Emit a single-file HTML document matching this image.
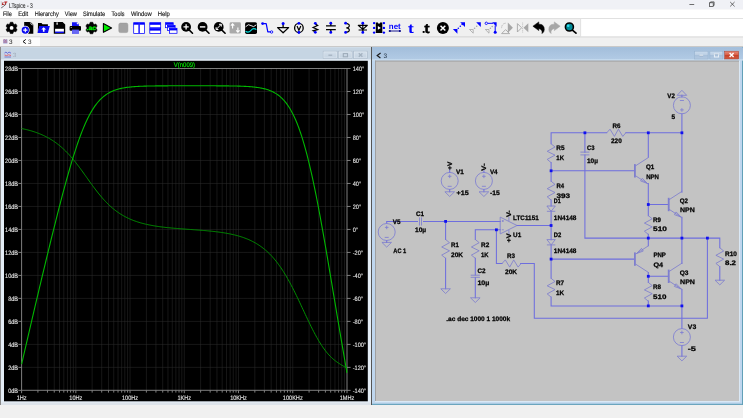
<!DOCTYPE html><html><head><meta charset="utf-8"><style>
html,body{margin:0;padding:0;width:743px;height:418px;overflow:hidden;background:#f0f0f0}
svg{display:block;will-change:transform} text{text-rendering:geometricPrecision}
</style></head><body><svg width="743" height="418" viewBox="0 0 743 418"><rect x="0" y="0" width="743" height="418" fill="#f0f0f0"/><rect x="0" y="0" width="743" height="9.5" fill="#f0f1f6"/><rect x="0" y="9.5" width="743" height="9" fill="#ffffff"/><rect x="0" y="18.5" width="743" height="18.5" fill="#ffffff"/><rect x="0" y="19" width="580" height="18" fill="#f0f0f0"/><rect x="0" y="18" width="743" height="0.8" fill="#dadada"/><rect x="0" y="36.6" width="743" height="0.9" fill="#c4c4c4"/><rect x="0" y="37.5" width="743" height="9" fill="#f0f0f0"/><rect x="0" y="37.5" width="20" height="9" fill="#f4f4f4"/><rect x="20" y="37.5" width="20" height="9" fill="#fdfdfd"/><rect x="0" y="46.3" width="743" height="0.8" fill="#b8b8b8"/><rect x="0" y="47" width="371" height="358" fill="#e4edf6"/><rect x="1" y="402.6" width="370" height="2.4" fill="#dde3ea"/><rect x="0" y="47" width="1" height="358" fill="#8a8a8a"/><rect x="1" y="47.3" width="370" height="12" fill="#c6d5e3"/><rect x="4" y="59.2" width="364" height="1.6" fill="#dfe9f2"/><rect x="4" y="60.8" width="363.8" height="340.5" fill="#000000"/><path d="M37.92,68.5 V390.3 M47.47,68.5 V390.3 M54.25,68.5 V390.3 M59.51,68.5 V390.3 M63.80,68.5 V390.3 M67.43,68.5 V390.3 M70.57,68.5 V390.3 M73.35,68.5 V390.3 M75.83,68.5 V390.3 M92.15,68.5 V390.3 M101.70,68.5 V390.3 M108.48,68.5 V390.3 M113.74,68.5 V390.3 M118.03,68.5 V390.3 M121.66,68.5 V390.3 M124.80,68.5 V390.3 M127.58,68.5 V390.3 M130.06,68.5 V390.3 M146.38,68.5 V390.3 M155.93,68.5 V390.3 M162.71,68.5 V390.3 M167.97,68.5 V390.3 M172.26,68.5 V390.3 M175.89,68.5 V390.3 M179.03,68.5 V390.3 M181.81,68.5 V390.3 M184.29,68.5 V390.3 M200.61,68.5 V390.3 M210.16,68.5 V390.3 M216.94,68.5 V390.3 M222.20,68.5 V390.3 M226.49,68.5 V390.3 M230.12,68.5 V390.3 M233.26,68.5 V390.3 M236.04,68.5 V390.3 M238.52,68.5 V390.3 M254.84,68.5 V390.3 M264.39,68.5 V390.3 M271.17,68.5 V390.3 M276.43,68.5 V390.3 M280.72,68.5 V390.3 M284.35,68.5 V390.3 M287.49,68.5 V390.3 M290.27,68.5 V390.3 M292.75,68.5 V390.3 M309.07,68.5 V390.3 M318.62,68.5 V390.3 M325.40,68.5 V390.3 M330.66,68.5 V390.3 M334.95,68.5 V390.3 M338.58,68.5 V390.3 M341.72,68.5 V390.3 M344.50,68.5 V390.3 M22.5,91.49 H347 M22.5,114.48 H347 M22.5,137.47 H347 M22.5,160.46 H347 M22.5,183.45 H347 M22.5,206.44 H347 M22.5,229.43 H347 M22.5,252.42 H347 M22.5,275.41 H347 M22.5,298.40 H347 M22.5,321.39 H347 M22.5,344.38 H347 M22.5,367.37 H347" stroke="#2e2e2e" stroke-width="1" stroke-dasharray="1 1" fill="none"/><path d="M21.6,68.5 V390.3 M21.6,68.5 H347 M347,68.5 V390.3 M21.6,390.3 H347" stroke="#8c8c8c" stroke-width="0.9" fill="none"/><path d="M18.4,68.50 H21.6 M347,68.50 H350.6 M18.4,91.49 H21.6 M347,91.49 H350.6 M18.4,114.48 H21.6 M347,114.48 H350.6 M18.4,137.47 H21.6 M347,137.47 H350.6 M18.4,160.46 H21.6 M347,160.46 H350.6 M18.4,183.45 H21.6 M347,183.45 H350.6 M18.4,206.44 H21.6 M347,206.44 H350.6 M18.4,229.43 H21.6 M347,229.43 H350.6 M18.4,252.42 H21.6 M347,252.42 H350.6 M18.4,275.41 H21.6 M347,275.41 H350.6 M18.4,298.40 H21.6 M347,298.40 H350.6 M18.4,321.39 H21.6 M347,321.39 H350.6 M18.4,344.38 H21.6 M347,344.38 H350.6 M18.4,367.37 H21.6 M347,367.37 H350.6 M18.4,390.36 H21.6 M347,390.36 H350.6 M21.60,390.3 V393.2 M37.92,390.3 V392.6 M47.47,390.3 V392.6 M54.25,390.3 V392.6 M59.51,390.3 V392.6 M63.80,390.3 V392.6 M67.43,390.3 V392.6 M70.57,390.3 V392.6 M73.35,390.3 V392.6 M75.83,390.3 V393.2 M92.15,390.3 V392.6 M101.70,390.3 V392.6 M108.48,390.3 V392.6 M113.74,390.3 V392.6 M118.03,390.3 V392.6 M121.66,390.3 V392.6 M124.80,390.3 V392.6 M127.58,390.3 V392.6 M130.06,390.3 V393.2 M146.38,390.3 V392.6 M155.93,390.3 V392.6 M162.71,390.3 V392.6 M167.97,390.3 V392.6 M172.26,390.3 V392.6 M175.89,390.3 V392.6 M179.03,390.3 V392.6 M181.81,390.3 V392.6 M184.29,390.3 V393.2 M200.61,390.3 V392.6 M210.16,390.3 V392.6 M216.94,390.3 V392.6 M222.20,390.3 V392.6 M226.49,390.3 V392.6 M230.12,390.3 V392.6 M233.26,390.3 V392.6 M236.04,390.3 V392.6 M238.52,390.3 V393.2 M254.84,390.3 V392.6 M264.39,390.3 V392.6 M271.17,390.3 V392.6 M276.43,390.3 V392.6 M280.72,390.3 V392.6 M284.35,390.3 V392.6 M287.49,390.3 V392.6 M290.27,390.3 V392.6 M292.75,390.3 V393.2 M309.07,390.3 V392.6 M318.62,390.3 V392.6 M325.40,390.3 V392.6 M330.66,390.3 V392.6 M334.95,390.3 V392.6 M338.58,390.3 V392.6 M341.72,390.3 V392.6 M344.50,390.3 V392.6 M347,390.3 V393.2" stroke="#8c8c8c" stroke-width="0.9" fill="none"/><g font-family="Liberation Sans, sans-serif" font-size="6.5" fill="#e4e4e4" stroke="#e4e4e4" stroke-width="0.12"><text x="18.1" y="70.90" text-anchor="end" textLength="13.06" lengthAdjust="spacingAndGlyphs">28dB</text><text x="352.7" y="70.90" textLength="11.56" lengthAdjust="spacingAndGlyphs">140°</text><text x="18.1" y="93.89" text-anchor="end" textLength="13.06" lengthAdjust="spacingAndGlyphs">26dB</text><text x="352.7" y="93.89" textLength="11.56" lengthAdjust="spacingAndGlyphs">120°</text><text x="18.1" y="116.88" text-anchor="end" textLength="13.06" lengthAdjust="spacingAndGlyphs">24dB</text><text x="352.7" y="116.88" textLength="11.56" lengthAdjust="spacingAndGlyphs">100°</text><text x="18.1" y="139.87" text-anchor="end" textLength="13.06" lengthAdjust="spacingAndGlyphs">22dB</text><text x="352.7" y="139.87" textLength="8.45" lengthAdjust="spacingAndGlyphs">80°</text><text x="18.1" y="162.86" text-anchor="end" textLength="13.06" lengthAdjust="spacingAndGlyphs">20dB</text><text x="352.7" y="162.86" textLength="8.45" lengthAdjust="spacingAndGlyphs">60°</text><text x="18.1" y="185.85" text-anchor="end" textLength="13.06" lengthAdjust="spacingAndGlyphs">18dB</text><text x="352.7" y="185.85" textLength="8.45" lengthAdjust="spacingAndGlyphs">40°</text><text x="18.1" y="208.84" text-anchor="end" textLength="13.06" lengthAdjust="spacingAndGlyphs">16dB</text><text x="352.7" y="208.84" textLength="8.45" lengthAdjust="spacingAndGlyphs">20°</text><text x="18.1" y="231.83" text-anchor="end" textLength="13.06" lengthAdjust="spacingAndGlyphs">14dB</text><text x="352.7" y="231.83" textLength="5.34" lengthAdjust="spacingAndGlyphs">0°</text><text x="18.1" y="254.82" text-anchor="end" textLength="13.06" lengthAdjust="spacingAndGlyphs">12dB</text><text x="352.7" y="254.82" textLength="10.31" lengthAdjust="spacingAndGlyphs">-20°</text><text x="18.1" y="277.81" text-anchor="end" textLength="13.06" lengthAdjust="spacingAndGlyphs">10dB</text><text x="352.7" y="277.81" textLength="10.31" lengthAdjust="spacingAndGlyphs">-40°</text><text x="18.1" y="300.80" text-anchor="end" textLength="9.95" lengthAdjust="spacingAndGlyphs">8dB</text><text x="352.7" y="300.80" textLength="10.31" lengthAdjust="spacingAndGlyphs">-60°</text><text x="18.1" y="323.79" text-anchor="end" textLength="9.95" lengthAdjust="spacingAndGlyphs">6dB</text><text x="352.7" y="323.79" textLength="10.31" lengthAdjust="spacingAndGlyphs">-80°</text><text x="18.1" y="346.78" text-anchor="end" textLength="9.95" lengthAdjust="spacingAndGlyphs">4dB</text><text x="352.7" y="346.78" textLength="13.42" lengthAdjust="spacingAndGlyphs">-100°</text><text x="18.1" y="369.77" text-anchor="end" textLength="9.95" lengthAdjust="spacingAndGlyphs">2dB</text><text x="352.7" y="369.77" textLength="13.42" lengthAdjust="spacingAndGlyphs">-120°</text><text x="18.1" y="392.76" text-anchor="end" textLength="9.95" lengthAdjust="spacingAndGlyphs">0dB</text><text x="352.7" y="392.76" textLength="13.42" lengthAdjust="spacingAndGlyphs">-140°</text><text x="21.60" y="399.6" text-anchor="middle" textLength="9.94" lengthAdjust="spacingAndGlyphs">1Hz</text><text x="75.83" y="399.6" text-anchor="middle" textLength="13.05" lengthAdjust="spacingAndGlyphs">10Hz</text><text x="130.06" y="399.6" text-anchor="middle" textLength="16.16" lengthAdjust="spacingAndGlyphs">100Hz</text><text x="184.29" y="399.6" text-anchor="middle" textLength="13.67" lengthAdjust="spacingAndGlyphs">1KHz</text><text x="238.52" y="399.6" text-anchor="middle" textLength="16.78" lengthAdjust="spacingAndGlyphs">10KHz</text><text x="292.75" y="399.6" text-anchor="middle" textLength="19.89" lengthAdjust="spacingAndGlyphs">100KHz</text><text x="346.98" y="399.6" text-anchor="middle" textLength="14.60" lengthAdjust="spacingAndGlyphs">1MHz</text></g><text x="184.4" y="66.9" font-family="Liberation Sans, sans-serif" font-size="6.6" fill="#00dd00" stroke="#00dd00" stroke-width="0.2" text-anchor="middle" textLength="21.2" lengthAdjust="spacingAndGlyphs">V(n009)</text><path d="M21.60,128.55 L22.42,128.71 L23.23,128.88 L24.05,129.05 L24.86,129.23 L25.68,129.42 L26.49,129.61 L27.31,129.81 L28.12,130.02 L28.94,130.23 L29.75,130.46 L30.57,130.69 L31.39,130.92 L32.20,131.17 L33.02,131.42 L33.83,131.68 L34.65,131.95 L35.46,132.23 L36.28,132.52 L37.09,132.81 L37.91,133.12 L38.73,133.43 L39.54,133.76 L40.36,134.09 L41.17,134.44 L41.99,134.79 L42.80,135.16 L43.62,135.53 L44.43,135.92 L45.25,136.32 L46.06,136.73 L46.88,137.15 L47.70,137.59 L48.51,138.04 L49.33,138.50 L50.14,138.97 L50.96,139.46 L51.77,139.97 L52.59,140.49 L53.40,141.02 L54.22,141.57 L55.04,142.14 L55.85,142.72 L56.67,143.32 L57.48,143.94 L58.30,144.57 L59.11,145.22 L59.93,145.89 L60.74,146.57 L61.56,147.28 L62.37,148.00 L63.19,148.75 L64.01,149.51 L64.82,150.29 L65.64,151.09 L66.45,151.91 L67.27,152.75 L68.08,153.61 L68.90,154.48 L69.71,155.38 L70.53,156.30 L71.34,157.23 L72.16,158.18 L72.98,159.15 L73.79,160.14 L74.61,161.14 L75.42,162.16 L76.24,163.20 L77.05,164.25 L77.87,165.32 L78.68,166.39 L79.50,167.48 L80.32,168.58 L81.13,169.70 L81.95,170.81 L82.76,171.94 L83.58,173.08 L84.39,174.21 L85.21,175.36 L86.02,176.50 L86.84,177.65 L87.65,178.79 L88.47,179.94 L89.29,181.08 L90.10,182.21 L90.92,183.35 L91.73,184.47 L92.55,185.59 L93.36,186.69 L94.18,187.79 L94.99,188.87 L95.81,189.95 L96.62,191.00 L97.44,192.05 L98.26,193.08 L99.07,194.09 L99.89,195.09 L100.70,196.06 L101.52,197.03 L102.33,197.97 L103.15,198.89 L103.96,199.80 L104.78,200.68 L105.60,201.55 L106.41,202.39 L107.23,203.22 L108.04,204.03 L108.86,204.82 L109.67,205.58 L110.49,206.33 L111.30,207.06 L112.12,207.77 L112.93,208.46 L113.75,209.13 L114.57,209.78 L115.38,210.42 L116.20,211.03 L117.01,211.63 L117.83,212.21 L118.64,212.77 L119.46,213.32 L120.27,213.85 L121.09,214.37 L121.91,214.87 L122.72,215.35 L123.54,215.82 L124.35,216.27 L125.17,216.71 L125.98,217.14 L126.80,217.55 L127.61,217.95 L128.43,218.34 L129.24,218.71 L130.06,219.08 L130.88,219.43 L131.69,219.77 L132.51,220.10 L133.32,220.42 L134.14,220.72 L134.95,221.02 L135.77,221.31 L136.58,221.59 L137.40,221.86 L138.21,222.12 L139.03,222.38 L139.85,222.62 L140.66,222.86 L141.48,223.09 L142.29,223.31 L143.11,223.53 L143.92,223.73 L144.74,223.93 L145.55,224.13 L146.37,224.32 L147.19,224.50 L148.00,224.68 L148.82,224.85 L149.63,225.01 L150.45,225.17 L151.26,225.33 L152.08,225.48 L152.89,225.63 L153.71,225.77 L154.52,225.90 L155.34,226.04 L156.16,226.17 L156.97,226.29 L157.79,226.41 L158.60,226.53 L159.42,226.64 L160.23,226.75 L161.05,226.86 L161.86,226.97 L162.68,227.07 L163.50,227.17 L164.31,227.26 L165.13,227.36 L165.94,227.45 L166.76,227.54 L167.57,227.62 L168.39,227.71 L169.20,227.79 L170.02,227.87 L170.83,227.95 L171.65,228.02 L172.47,228.10 L173.28,228.17 L174.10,228.24 L174.91,228.31 L175.73,228.38 L176.54,228.45 L177.36,228.52 L178.17,228.58 L178.99,228.65 L179.80,228.71 L180.62,228.77 L181.44,228.84 L182.25,228.90 L183.07,228.96 L183.88,229.02 L184.70,229.08 L185.51,229.14 L186.33,229.20 L187.14,229.25 L187.96,229.31 L188.78,229.37 L189.59,229.43 L190.41,229.49 L191.22,229.54 L192.04,229.60 L192.85,229.66 L193.67,229.72 L194.48,229.78 L195.30,229.84 L196.11,229.90 L196.93,229.96 L197.75,230.02 L198.56,230.08 L199.38,230.15 L200.19,230.21 L201.01,230.27 L201.82,230.34 L202.64,230.41 L203.45,230.47 L204.27,230.54 L205.08,230.61 L205.90,230.68 L206.72,230.76 L207.53,230.83 L208.35,230.91 L209.16,230.99 L209.98,231.07 L210.79,231.15 L211.61,231.23 L212.42,231.32 L213.24,231.41 L214.06,231.50 L214.87,231.59 L215.69,231.69 L216.50,231.79 L217.32,231.89 L218.13,231.99 L218.95,232.10 L219.76,232.21 L220.58,232.33 L221.39,232.44 L222.21,232.56 L223.03,232.69 L223.84,232.82 L224.66,232.95 L225.47,233.09 L226.29,233.23 L227.10,233.38 L227.92,233.53 L228.73,233.68 L229.55,233.84 L230.37,234.01 L231.18,234.18 L232.00,234.36 L232.81,234.54 L233.63,234.73 L234.44,234.92 L235.26,235.12 L236.07,235.33 L236.89,235.55 L237.70,235.77 L238.52,236.00 L239.34,236.24 L240.15,236.49 L240.97,236.74 L241.78,237.00 L242.60,237.28 L243.41,237.56 L244.23,237.85 L245.04,238.15 L245.86,238.46 L246.67,238.78 L247.49,239.11 L248.31,239.46 L249.12,239.81 L249.94,240.18 L250.75,240.56 L251.57,240.95 L252.38,241.36 L253.20,241.78 L254.01,242.21 L254.83,242.66 L255.65,243.12 L256.46,243.60 L257.28,244.10 L258.09,244.61 L258.91,245.14 L259.72,245.69 L260.54,246.25 L261.35,246.83 L262.17,247.44 L262.98,248.06 L263.80,248.70 L264.62,249.36 L265.43,250.05 L266.25,250.75 L267.06,251.48 L267.88,252.23 L268.69,253.01 L269.51,253.81 L270.32,254.63 L271.14,255.48 L271.96,256.35 L272.77,257.26 L273.59,258.18 L274.40,259.14 L275.22,260.12 L276.03,261.13 L276.85,262.17 L277.66,263.23 L278.48,264.33 L279.29,265.46 L280.11,266.61 L280.93,267.79 L281.74,269.01 L282.56,270.25 L283.37,271.53 L284.19,272.83 L285.00,274.16 L285.82,275.52 L286.63,276.91 L287.45,278.33 L288.26,279.77 L289.08,281.25 L289.90,282.74 L290.71,284.27 L291.53,285.82 L292.34,287.39 L293.16,288.99 L293.97,290.60 L294.79,292.24 L295.60,293.89 L296.42,295.57 L297.24,297.25 L298.05,298.96 L298.87,300.67 L299.68,302.39 L300.50,304.13 L301.31,305.87 L302.13,307.61 L302.94,309.36 L303.76,311.10 L304.57,312.85 L305.39,314.59 L306.21,316.32 L307.02,318.05 L307.84,319.77 L308.65,321.47 L309.47,323.16 L310.28,324.84 L311.10,326.49 L311.91,328.13 L312.73,329.74 L313.54,331.33 L314.36,332.89 L315.18,334.42 L315.99,335.93 L316.81,337.40 L317.62,338.84 L318.44,340.24 L319.25,341.61 L320.07,342.95 L320.88,344.24 L321.70,345.50 L322.52,346.72 L323.33,347.90 L324.15,349.03 L324.96,350.13 L325.78,351.19 L326.59,352.21 L327.41,353.19 L328.22,354.13 L329.04,355.03 L329.85,355.89 L330.67,356.72 L331.49,357.51 L332.30,358.27 L333.12,358.99 L333.93,359.69 L334.75,360.35 L335.56,360.99 L336.38,361.60 L337.19,362.18 L338.01,362.75 L338.83,363.29 L339.64,363.82 L340.46,364.33 L341.27,364.83 L342.09,365.32 L342.90,365.80 L343.72,366.27 L344.53,366.74 L345.35,367.20 L346.16,367.67 L346.98,368.13" stroke="#009000" stroke-width="1.0" fill="none"/><path d="M21.60,364.10 L22.42,360.58 L23.23,357.06 L24.05,353.54 L24.86,350.03 L25.68,346.52 L26.49,343.01 L27.31,339.51 L28.12,336.01 L28.94,332.51 L29.75,329.02 L30.57,325.53 L31.39,322.05 L32.20,318.57 L33.02,315.10 L33.83,311.63 L34.65,308.16 L35.46,304.70 L36.28,301.24 L37.09,297.79 L37.91,294.35 L38.73,290.91 L39.54,287.48 L40.36,284.05 L41.17,280.63 L41.99,277.21 L42.80,273.81 L43.62,270.41 L44.43,267.01 L45.25,263.63 L46.06,260.25 L46.88,256.88 L47.70,253.52 L48.51,250.17 L49.33,246.83 L50.14,243.50 L50.96,240.17 L51.77,236.87 L52.59,233.57 L53.40,230.28 L54.22,227.01 L55.04,223.76 L55.85,220.51 L56.67,217.29 L57.48,214.08 L58.30,210.89 L59.11,207.71 L59.93,204.56 L60.74,201.43 L61.56,198.31 L62.37,195.23 L63.19,192.16 L64.01,189.12 L64.82,186.11 L65.64,183.13 L66.45,180.17 L67.27,177.25 L68.08,174.36 L68.90,171.50 L69.71,168.68 L70.53,165.90 L71.34,163.15 L72.16,160.45 L72.98,157.78 L73.79,155.16 L74.61,152.59 L75.42,150.06 L76.24,147.58 L77.05,145.15 L77.87,142.77 L78.68,140.44 L79.50,138.16 L80.32,135.94 L81.13,133.78 L81.95,131.67 L82.76,129.62 L83.58,127.63 L84.39,125.69 L85.21,123.82 L86.02,122.01 L86.84,120.25 L87.65,118.56 L88.47,116.92 L89.29,115.35 L90.10,113.83 L90.92,112.37 L91.73,110.97 L92.55,109.63 L93.36,108.35 L94.18,107.12 L94.99,105.94 L95.81,104.82 L96.62,103.75 L97.44,102.73 L98.26,101.76 L99.07,100.83 L99.89,99.95 L100.70,99.12 L101.52,98.33 L102.33,97.58 L103.15,96.87 L103.96,96.20 L104.78,95.57 L105.60,94.97 L106.41,94.41 L107.23,93.87 L108.04,93.37 L108.86,92.90 L109.67,92.45 L110.49,92.03 L111.30,91.63 L112.12,91.26 L112.93,90.91 L113.75,90.59 L114.57,90.28 L115.38,89.99 L116.20,89.72 L117.01,89.46 L117.83,89.23 L118.64,89.00 L119.46,88.79 L120.27,88.60 L121.09,88.41 L121.91,88.24 L122.72,88.08 L123.54,87.93 L124.35,87.79 L125.17,87.65 L125.98,87.53 L126.80,87.41 L127.61,87.31 L128.43,87.21 L129.24,87.11 L130.06,87.02 L130.88,86.94 L131.69,86.86 L132.51,86.79 L133.32,86.72 L134.14,86.66 L134.95,86.60 L135.77,86.55 L136.58,86.49 L137.40,86.45 L138.21,86.40 L139.03,86.36 L139.85,86.32 L140.66,86.28 L141.48,86.25 L142.29,86.22 L143.11,86.19 L143.92,86.16 L144.74,86.14 L145.55,86.11 L146.37,86.09 L147.19,86.07 L148.00,86.05 L148.82,86.03 L149.63,86.01 L150.45,86.00 L151.26,85.98 L152.08,85.97 L152.89,85.95 L153.71,85.94 L154.52,85.93 L155.34,85.92 L156.16,85.91 L156.97,85.90 L157.79,85.89 L158.60,85.89 L159.42,85.88 L160.23,85.87 L161.05,85.86 L161.86,85.86 L162.68,85.85 L163.50,85.85 L164.31,85.84 L165.13,85.84 L165.94,85.83 L166.76,85.83 L167.57,85.83 L168.39,85.82 L169.20,85.82 L170.02,85.82 L170.83,85.81 L171.65,85.81 L172.47,85.81 L173.28,85.81 L174.10,85.80 L174.91,85.80 L175.73,85.80 L176.54,85.80 L177.36,85.80 L178.17,85.80 L178.99,85.80 L179.80,85.79 L180.62,85.79 L181.44,85.79 L182.25,85.79 L183.07,85.79 L183.88,85.79 L184.70,85.79 L185.51,85.79 L186.33,85.79 L187.14,85.79 L187.96,85.79 L188.78,85.79 L189.59,85.79 L190.41,85.79 L191.22,85.79 L192.04,85.79 L192.85,85.79 L193.67,85.79 L194.48,85.79 L195.30,85.79 L196.11,85.79 L196.93,85.79 L197.75,85.79 L198.56,85.79 L199.38,85.79 L200.19,85.79 L201.01,85.79 L201.82,85.79 L202.64,85.79 L203.45,85.79 L204.27,85.79 L205.08,85.80 L205.90,85.80 L206.72,85.80 L207.53,85.80 L208.35,85.80 L209.16,85.80 L209.98,85.80 L210.79,85.81 L211.61,85.81 L212.42,85.81 L213.24,85.81 L214.06,85.82 L214.87,85.82 L215.69,85.82 L216.50,85.83 L217.32,85.83 L218.13,85.83 L218.95,85.84 L219.76,85.84 L220.58,85.85 L221.39,85.85 L222.21,85.86 L223.03,85.87 L223.84,85.87 L224.66,85.88 L225.47,85.89 L226.29,85.89 L227.10,85.90 L227.92,85.91 L228.73,85.92 L229.55,85.93 L230.37,85.94 L231.18,85.96 L232.00,85.97 L232.81,85.98 L233.63,86.00 L234.44,86.02 L235.26,86.03 L236.07,86.05 L236.89,86.07 L237.70,86.09 L238.52,86.12 L239.34,86.14 L240.15,86.17 L240.97,86.19 L241.78,86.22 L242.60,86.26 L243.41,86.29 L244.23,86.33 L245.04,86.37 L245.86,86.41 L246.67,86.46 L247.49,86.50 L248.31,86.56 L249.12,86.61 L249.94,86.67 L250.75,86.74 L251.57,86.81 L252.38,86.88 L253.20,86.96 L254.01,87.04 L254.83,87.13 L255.65,87.23 L256.46,87.33 L257.28,87.44 L258.09,87.56 L258.91,87.69 L259.72,87.82 L260.54,87.97 L261.35,88.12 L262.17,88.29 L262.98,88.46 L263.80,88.65 L264.62,88.85 L265.43,89.07 L266.25,89.30 L267.06,89.54 L267.88,89.81 L268.69,90.09 L269.51,90.39 L270.32,90.71 L271.14,91.05 L271.96,91.41 L272.77,91.80 L273.59,92.21 L274.40,92.65 L275.22,93.12 L276.03,93.61 L276.85,94.14 L277.66,94.71 L278.48,95.31 L279.29,95.94 L280.11,96.62 L280.93,97.33 L281.74,98.09 L282.56,98.90 L283.37,99.75 L284.19,100.66 L285.00,101.61 L285.82,102.62 L286.63,103.69 L287.45,104.82 L288.26,106.00 L289.08,107.26 L289.90,108.57 L290.71,109.96 L291.53,111.42 L292.34,112.95 L293.16,114.56 L293.97,116.24 L294.79,118.00 L295.60,119.84 L296.42,121.77 L297.24,123.78 L298.05,125.88 L298.87,128.06 L299.68,130.34 L300.50,132.70 L301.31,135.15 L302.13,137.70 L302.94,140.34 L303.76,143.07 L304.57,145.90 L305.39,148.82 L306.21,151.83 L307.02,154.93 L307.84,158.13 L308.65,161.41 L309.47,164.79 L310.28,168.26 L311.10,171.81 L311.91,175.46 L312.73,179.18 L313.54,182.99 L314.36,186.88 L315.18,190.85 L315.99,194.89 L316.81,199.01 L317.62,203.20 L318.44,207.45 L319.25,211.77 L320.07,216.15 L320.88,220.59 L321.70,225.08 L322.52,229.62 L323.33,234.21 L324.15,238.84 L324.96,243.51 L325.78,248.21 L326.59,252.95 L327.41,257.71 L328.22,262.50 L329.04,267.31 L329.85,272.13 L330.67,276.97 L331.49,281.82 L332.30,286.68 L333.12,291.54 L333.93,296.40 L334.75,301.26 L335.56,306.11 L336.38,310.96 L337.19,315.80 L338.01,320.63 L338.83,325.45 L339.64,330.25 L340.46,335.04 L341.27,339.82 L342.09,344.58 L342.90,349.32 L343.72,354.06 L344.53,358.77 L345.35,363.47 L346.16,368.16 L346.98,372.83" stroke="#00b800" stroke-width="1.1" fill="none"/><rect x="371" y="47" width="1" height="358" fill="#555"/><rect x="372" y="47" width="371" height="358" fill="#bfd6ee"/><rect x="372" y="47.3" width="371" height="12.5" fill="#a3bfdb"/><rect x="372" y="403.8" width="371" height="1.1" fill="#62a0b8"/><rect x="742" y="47" width="1" height="358" fill="#62a0b8"/><rect x="375" y="60.6" width="365" height="341.6" fill="#dae8f5"/><rect x="375" y="60.6" width="364" height="340.4" fill="#c3c3c3"/><defs><linearGradient id="gclose" x1="0" y1="0" x2="0" y2="1"><stop offset="0" stop-color="#e88a78"/><stop offset="0.45" stop-color="#d8604a"/><stop offset="0.5" stop-color="#c84028"/><stop offset="1" stop-color="#d05a40"/></linearGradient><linearGradient id="gbtn" x1="0" y1="0" x2="0" y2="1"><stop offset="0" stop-color="#cadcee"/><stop offset="0.45" stop-color="#bccfe4"/><stop offset="0.5" stop-color="#a8c0da"/><stop offset="1" stop-color="#b4cae2"/></linearGradient><linearGradient id="gtitle" x1="0" y1="0" x2="0" y2="1"><stop offset="0" stop-color="#a3bedb"/><stop offset="1" stop-color="#b2cbe5"/></linearGradient><linearGradient id="gbtn2" x1="0" y1="0" x2="0" y2="1"><stop offset="0" stop-color="#d6e1ec"/><stop offset="0.5" stop-color="#cbd8e5"/><stop offset="1" stop-color="#c6d4e2"/></linearGradient></defs><rect x="372" y="47.4" width="371" height="12.6" fill="url(#gtitle)"/><rect x="372" y="59.2" width="371" height="1.4" fill="#c8dcef"/><rect x="694.7" y="51.2" width="13.299999999999955" height="7.8" fill="url(#gbtn)" stroke="#94b0cc" stroke-width="0.5"/><rect x="709.9" y="51.2" width="12.899999999999977" height="7.8" fill="url(#gbtn)" stroke="#94b0cc" stroke-width="0.5"/><rect x="724.7" y="51.2" width="14" height="7.8" fill="url(#gclose)" stroke="#a84030" stroke-width="0.5"/><path d="M699.6,55.4 H703.1" stroke="#eef4fa" stroke-width="1.3"/><path d="M699.6,55.9 H703.1" stroke="#6a86a4" stroke-width="0.4"/><rect x="714.4" y="53.8" width="4.2" height="3.2" fill="none" stroke="#eef4fa" stroke-width="0.9"/><path d="M714.4,54.2 H718.6" stroke="#7890aa" stroke-width="0.4"/><path d="M729.6,53.1 L733.6,57.1 M733.6,53.1 L729.6,57.1" stroke="#fff" stroke-width="1.4"/><path d="M380.6,53 L377.2,55.6 L380.4,58" stroke="#1a1a1a" stroke-width="1.2" fill="none"/><text x="383.5" y="57.7" font-family="Liberation Sans, sans-serif" font-size="6.5" fill="#2a3a4c">3</text><rect x="375" y="60.6" width="364" height="0.9" fill="#9c9c9c"/><rect x="375" y="60.6" width="0.9" height="340.4" fill="#9c9c9c"/><rect x="323.2" y="51.2" width="14.100000000000023" height="7.4" fill="url(#gbtn2)" stroke="#aebdcc" stroke-width="0.7"/><rect x="323.9" y="51.9" width="12.700000000000022" height="6" fill="none" stroke="#e2eaf2" stroke-width="0.5"/><rect x="338.4" y="51.2" width="13.600000000000023" height="7.4" fill="url(#gbtn2)" stroke="#aebdcc" stroke-width="0.7"/><rect x="339.09999999999997" y="51.9" width="12.200000000000022" height="6" fill="none" stroke="#e2eaf2" stroke-width="0.5"/><rect x="353.6" y="51.2" width="13.699999999999989" height="7.4" fill="url(#gbtn2)" stroke="#aebdcc" stroke-width="0.7"/><rect x="354.3" y="51.9" width="12.299999999999988" height="6" fill="none" stroke="#e2eaf2" stroke-width="0.5"/><path d="M328.4,55.2 H332.2" stroke="#a4b2c0" stroke-width="1.3"/><rect x="343.3" y="53.6" width="4.2" height="3.2" fill="none" stroke="#9eacba" stroke-width="1.1"/><path d="M358.8,53.2 L362.4,56.8 M362.4,53.2 L358.8,56.8" stroke="#a4b2c0" stroke-width="1.3"/><rect x="4.2" y="51.7" width="7.2" height="6.2" fill="#c8cde8"/><path d="M4.5,53 L6,52 L7.5,53.4 L9,52 L11,53.2" stroke="#5060d0" stroke-width="0.8" fill="none"/><path d="M4.5,55 L6.5,55.6 L8.5,54.8 L11,55.5" stroke="#e06060" stroke-width="0.9" fill="none"/><path d="M4.5,57 H11" stroke="#6070c0" stroke-width="0.8"/><text x="13" y="57.4" font-family="Liberation Sans, sans-serif" font-size="6" fill="#a0aab8">3</text><path d="M386.7,223.2 L386.7,221.4 M386.7,221.4 L417.5,221.4 M423.5,221.4 L500.2,221.4 M445.6,221.4 L445.6,239.5 M445.6,258.3 L445.6,288.8 M475.3,229.8 L500.2,229.8 M475.3,229.8 L475.3,239.5 M475.3,258.3 L475.3,275.0 M475.3,277.5 L475.3,297.8 M496.4,229.8 L496.4,263.5 M496.4,263.5 L502.0,263.5 M520.6,263.5 L534.3,263.5 M534.3,263.5 L534.3,318.2 M534.3,318.2 L707.4,318.2 M707.4,318.2 L707.4,238.1 M517.0,225.5 L551.1,225.5 M551.1,132.8 L551.1,143.8 M551.1,162.5 L551.1,181.2 M551.1,199.9 L551.1,206.0 M551.1,211.3 L551.1,239.6 M551.1,245.3 L551.1,278.3 M551.1,297.0 L551.1,305.9 M551.1,305.9 L681.9,305.9 M551.1,132.8 L606.7,132.8 M625.8,132.8 L681.9,132.8 M584.9,132.8 L584.9,152.1 M584.9,154.9 L584.9,238.1 M584.9,238.1 L719.8,238.1 M551.1,170.8 L634.8,170.8 M551.1,259.1 L634.8,259.1 M648.3,132.8 L648.3,157.2 M648.3,183.6 L648.3,215.6 M648.3,204.5 L668.6,204.5 M648.3,234.3 L648.3,245.7 M648.3,272.4 L648.3,282.4 M648.3,276.3 L668.6,276.3 M648.3,301.1 L648.3,305.9 M681.9,113.7 L681.9,192.3 M681.9,217.2 L681.9,263.5 M681.9,289.5 L681.9,328.5 M681.9,345.7 L681.9,356.2 M719.8,238.1 L719.8,247.8 M719.8,266.6 L719.8,280.2 M449.7,189.4 L449.7,191.8 M483.9,189.4 L483.9,191.8 M386.7,240.8 L386.7,242.4 M681.9,95.3 L681.9,96.9 M449.7,169.8 L449.7,172.4 M483.9,170.8 L483.9,172.4" stroke="#6e6ede" stroke-width="1.05" fill="none" stroke-linecap="square"/><rect x="634.0" y="164.10000000000002" width="1.8" height="13.4" fill="#7e7ece"/><rect x="667.8000000000001" y="197.8" width="1.8" height="13.4" fill="#7e7ece"/><rect x="634.0" y="252.40000000000003" width="1.8" height="13.4" fill="#7e7ece"/><rect x="667.8000000000001" y="269.6" width="1.8" height="13.4" fill="#7e7ece"/><path d="M445.60,239.50 L449.50,242.70 L441.70,247.00 L449.50,250.80 L441.70,255.10 L445.60,258.30 M475.30,239.50 L479.20,242.70 L471.40,247.00 L479.20,250.80 L471.40,255.10 L475.30,258.30 M551.10,143.80 L555.00,147.00 L547.20,151.30 L555.00,155.10 L547.20,159.40 L551.10,162.60 M551.10,181.20 L555.00,184.40 L547.20,188.70 L555.00,192.50 L547.20,196.80 L551.10,200.00 M551.10,278.30 L555.00,281.50 L547.20,285.80 L555.00,289.60 L547.20,293.90 L551.10,297.10 M648.30,215.60 L652.20,218.80 L644.40,223.10 L652.20,226.90 L644.40,231.20 L648.30,234.40 M648.30,282.40 L652.20,285.60 L644.40,289.90 L652.20,293.70 L644.40,298.00 L648.30,301.20 M719.80,247.80 L723.70,251.00 L715.90,255.30 L723.70,259.10 L715.90,263.40 L719.80,266.60 M606.70,132.80 L610.00,129.20 L614.40,136.40 L618.40,129.20 L622.80,136.40 L625.80,132.80 M502.00,263.50 L505.30,259.90 L509.70,267.10 L513.70,259.90 L518.10,267.10 L521.10,263.50 M419.5,217.4 V225.5 M421.5,217.4 V225.5 M470.7,275.2 H479.9 M470.7,277.3 H479.9 M580.4,152.1 H589.4 M580.4,154.9 H589.4 M440.8,288.8 H450.40000000000003 L445.6,293.5 Z M470.5,297.8 H480.1 L475.3,302.5 Z M381.9,242.4 H391.5 L386.7,247.1 Z M444.9,191.8 H454.5 L449.7,196.5 Z M479.09999999999997,191.8 H488.7 L483.9,196.5 Z M715.0,280.2 H724.5999999999999 L719.8,284.9 Z M677.1,356.2 H686.6999999999999 L681.9,360.9 Z M677.1,95.3 H686.7 L681.9,90.3 Z M546.9,206.0 H555.3 L551.1,211.3 Z M546.9,211.3 H555.3 M546.9,239.6 H555.3 L551.1,244.9 Z M546.9,244.9 H555.3 M500.2,217.1 L500.2,233.9 L517.0,225.5 Z M501.8,221.0 H503.8 M502.8,220.0 V222.0 M501.8,229.8 H503.8 M508.9,216.8 V221.0 M508.9,230.0 V234.5 M635.3,166.0 L648.4,157.5 M635.3,175.60000000000002 L648.4,184.10000000000002 M647.35,183.42 L640.59,180.94 L642.33,178.25 Z M669.1,199.7 L682.2,191.2 M669.1,209.3 L682.2,217.8 M681.15,217.12 L674.39,214.64 L676.13,211.95 Z M635.3,254.3 L648.4,245.8 M635.3,263.90000000000003 L648.4,272.40000000000003 M636.61,253.45 L641.50,248.37 L643.24,251.05 Z M669.1,271.5 L682.2,263.0 M669.1,281.1 L682.2,289.6 M681.15,288.92 L674.39,286.44 L676.13,283.75 Z" stroke="#7e7ece" stroke-width="0.85" fill="none"/><g stroke="#7e7ed2" stroke-width="0.85" fill="none"><circle cx="386.7" cy="232.0" r="8.5"/><path d="M384.9,227.4 H388.5 M386.7,225.6 V229.20000000000002 M384.7,237.4 H388.7"/><circle cx="449.7" cy="180.9" r="8.5"/><path d="M447.9,176.3 H451.5 M449.7,174.5 V178.10000000000002 M447.7,186.3 H451.7"/><circle cx="483.9" cy="180.9" r="8.5"/><path d="M482.09999999999997,176.3 H485.7 M483.9,174.5 V178.10000000000002 M481.9,186.3 H485.9"/><circle cx="681.9" cy="105.3" r="8.5"/><path d="M680.1,109.89999999999999 H683.6999999999999 M681.9,108.1 V111.69999999999999 M679.9,100.5 H683.9"/><circle cx="681.9" cy="337.1" r="8.5"/><path d="M680.1,332.5 H683.6999999999999 M681.9,330.7 V334.3 M679.9,342.5 H683.9"/></g><rect x="444.20000000000005" y="220.0" width="2.8" height="2.8" fill="#1010f0"/><rect x="495.0" y="228.4" width="2.8" height="2.8" fill="#1010f0"/><rect x="549.7" y="224.1" width="2.8" height="2.8" fill="#1010f0"/><rect x="549.7" y="257.70000000000005" width="2.8" height="2.8" fill="#1010f0"/><rect x="549.7" y="169.4" width="2.8" height="2.8" fill="#1010f0"/><rect x="583.5" y="131.4" width="2.8" height="2.8" fill="#1010f0"/><rect x="646.9" y="131.4" width="2.8" height="2.8" fill="#1010f0"/><rect x="680.5" y="131.4" width="2.8" height="2.8" fill="#1010f0"/><rect x="646.9" y="203.1" width="2.8" height="2.8" fill="#1010f0"/><rect x="646.9" y="236.7" width="2.8" height="2.8" fill="#1010f0"/><rect x="680.5" y="236.7" width="2.8" height="2.8" fill="#1010f0"/><rect x="706.0" y="236.7" width="2.8" height="2.8" fill="#1010f0"/><rect x="646.9" y="274.90000000000003" width="2.8" height="2.8" fill="#1010f0"/><rect x="646.9" y="304.5" width="2.8" height="2.8" fill="#1010f0"/><rect x="680.5" y="304.5" width="2.8" height="2.8" fill="#1010f0"/><g font-family="Liberation Sans, sans-serif" font-size="6.5" font-weight="bold" fill="#000000" stroke="#000" stroke-width="0.25"><text x="392.8" y="223.60" textLength="7.7" lengthAdjust="spacingAndGlyphs">V5</text><text x="393.3" y="252.50" textLength="13.0" lengthAdjust="spacingAndGlyphs">AC 1</text><text x="416.0" y="216.30" textLength="8.1" lengthAdjust="spacingAndGlyphs">C1</text><text x="415.0" y="231.60" textLength="11.2" lengthAdjust="spacingAndGlyphs">10µ</text><text x="451.0" y="247.30" textLength="7.8" lengthAdjust="spacingAndGlyphs">R1</text><text x="451.0" y="257.10" textLength="12.0" lengthAdjust="spacingAndGlyphs">20K</text><text x="456.0" y="173.60" textLength="7.9" lengthAdjust="spacingAndGlyphs">V1</text><text x="456.5" y="194.60" textLength="12.1" lengthAdjust="spacingAndGlyphs">+15</text><text x="489.9" y="173.60" textLength="7.7" lengthAdjust="spacingAndGlyphs">V4</text><text x="489.9" y="194.60" textLength="9.8" lengthAdjust="spacingAndGlyphs">-15</text><text x="513.1" y="220.10" textLength="25.6" lengthAdjust="spacingAndGlyphs">LTC1151</text><text x="513.1" y="236.60" textLength="8.1" lengthAdjust="spacingAndGlyphs">U1</text><text x="481.0" y="247.00" textLength="8.2" lengthAdjust="spacingAndGlyphs">R2</text><text x="481.0" y="256.80" textLength="7.6" lengthAdjust="spacingAndGlyphs">1K</text><text x="477.4" y="272.90" textLength="8.1" lengthAdjust="spacingAndGlyphs">C2</text><text x="477.4" y="285.30" textLength="12.0" lengthAdjust="spacingAndGlyphs">10µ</text><text x="507.1" y="258.20" textLength="8.0" lengthAdjust="spacingAndGlyphs">R3</text><text x="505.0" y="273.60" textLength="12.1" lengthAdjust="spacingAndGlyphs">20K</text><text x="446.3" y="321.20" textLength="63.8" lengthAdjust="spacingAndGlyphs">.ac dec 1000 1 1000k</text><text x="553.8" y="203.20" textLength="6.9" lengthAdjust="spacingAndGlyphs">D1</text><text x="553.8" y="219.70" textLength="22.6" lengthAdjust="spacingAndGlyphs">1N4148</text><text x="553.8" y="236.60" textLength="7.5" lengthAdjust="spacingAndGlyphs">D2</text><text x="553.8" y="253.40" textLength="22.6" lengthAdjust="spacingAndGlyphs">1N4148</text><text x="556.3" y="149.90" textLength="8.2" lengthAdjust="spacingAndGlyphs">R5</text><text x="556.3" y="159.50" textLength="7.7" lengthAdjust="spacingAndGlyphs">1K</text><text x="587.0" y="149.90" textLength="7.5" lengthAdjust="spacingAndGlyphs">C3</text><text x="587.0" y="163.30" textLength="11.0" lengthAdjust="spacingAndGlyphs">10µ</text><text x="556.4" y="188.10" textLength="7.6" lengthAdjust="spacingAndGlyphs">R4</text><text x="556.4" y="197.70" textLength="13.6" lengthAdjust="spacingAndGlyphs">393</text><text x="612.4" y="127.70" textLength="8.0" lengthAdjust="spacingAndGlyphs">R6</text><text x="611.0" y="143.40" textLength="10.8" lengthAdjust="spacingAndGlyphs">220</text><text x="667.3" y="97.60" textLength="7.6" lengthAdjust="spacingAndGlyphs">V2</text><text x="671.6" y="118.60" textLength="3.6" lengthAdjust="spacingAndGlyphs">5</text><text x="645.9" y="169.10" textLength="8.3" lengthAdjust="spacingAndGlyphs">Q1</text><text x="646.2" y="178.60" textLength="12.8" lengthAdjust="spacingAndGlyphs">NPN</text><text x="679.7" y="203.00" textLength="8.3" lengthAdjust="spacingAndGlyphs">Q2</text><text x="680.0" y="212.10" textLength="14.8" lengthAdjust="spacingAndGlyphs">NPN</text><text x="653.1" y="221.70" textLength="7.9" lengthAdjust="spacingAndGlyphs">R9</text><text x="653.1" y="231.30" textLength="13.9" lengthAdjust="spacingAndGlyphs">510</text><text x="653.4" y="256.80" textLength="12.5" lengthAdjust="spacingAndGlyphs">PNP</text><text x="653.4" y="266.50" textLength="9.6" lengthAdjust="spacingAndGlyphs">Q4</text><text x="679.7" y="274.80" textLength="8.8" lengthAdjust="spacingAndGlyphs">Q3</text><text x="680.0" y="284.20" textLength="15.0" lengthAdjust="spacingAndGlyphs">NPN</text><text x="653.1" y="289.30" textLength="8.0" lengthAdjust="spacingAndGlyphs">R8</text><text x="653.1" y="298.80" textLength="13.4" lengthAdjust="spacingAndGlyphs">510</text><text x="555.9" y="285.10" textLength="8.1" lengthAdjust="spacingAndGlyphs">R7</text><text x="555.9" y="294.90" textLength="8.1" lengthAdjust="spacingAndGlyphs">1K</text><text x="725.0" y="255.50" textLength="11.9" lengthAdjust="spacingAndGlyphs">R10</text><text x="725.0" y="265.40" textLength="11.0" lengthAdjust="spacingAndGlyphs">8.2</text><text x="687.8" y="329.10" textLength="8.4" lengthAdjust="spacingAndGlyphs">V3</text><text x="687.8" y="350.90" textLength="8.2" lengthAdjust="spacingAndGlyphs">-5</text></g><g font-family="Liberation Sans, sans-serif" font-size="6.5" font-weight="bold" fill="#000000" stroke="#000" stroke-width="0.25"><text transform="translate(452.0,169.7) rotate(-90)" x="0" y="0" textLength="8.0" lengthAdjust="spacingAndGlyphs">+V</text><text transform="translate(486.2,170.7) rotate(-90)" x="0" y="0" textLength="7.2" lengthAdjust="spacingAndGlyphs">V-</text><text transform="translate(511.2,217.1) rotate(-90)" x="0" y="0" textLength="6.8" lengthAdjust="spacingAndGlyphs">V-</text><text transform="translate(511.2,242.4) rotate(-90)" x="0" y="0" textLength="9.0" lengthAdjust="spacingAndGlyphs">+V</text></g><path d="M9.95,23.71 L10.31,22.25 L12.89,22.25 L13.25,23.71 L14.40,24.38 L15.85,23.95 L17.14,26.19 L16.05,27.23 L16.05,28.57 L17.14,29.61 L15.85,31.85 L14.40,31.42 L13.25,32.09 L12.89,33.55 L10.31,33.55 L9.95,32.09 L8.80,31.42 L7.35,31.85 L6.06,29.61 L7.15,28.57 L7.15,27.23 L6.06,26.19 L7.35,23.95 L8.80,24.38Z" fill="#000000" stroke="#000000" stroke-width="0.6" stroke-linejoin="round"/><circle cx="11.6" cy="27.9" r="1.9" fill="#fff"/><path d="M24.2,22 H30.5 L33.3,24.8 V33.8 H24.2 Z" fill="#000"/><path d="M30.3,22.4 Q30.5,24.6 32.9,25" stroke="#fff" stroke-width="0.7" fill="none"/><circle cx="25.3" cy="30.1" r="4.4" fill="#fff"/><circle cx="25.3" cy="30.1" r="3.7" fill="#0a0af0"/><path d="M23.2,30.1 H27.4 M25.3,28 V32.2" stroke="#fff" stroke-width="1.1"/><path d="M38,23 H41.5 L42.5,24.2 H47.9 V26.5 H39.3 L37.8,32.9 Z" fill="#000"/><path d="M39.3,26 H49.8 L47.9,32.9 H37.6 Z" fill="#0a0af0"/><path d="M43.7,27.2 L41.3,29.6 H42.9 V31.8 H44.5 V29.6 H46.1 Z" fill="#fff"/><path d="M53.8,22 H62.6 L65.2,24.6 V33.8 H53.8 Z" fill="#000"/><rect x="56.5" y="22.4" width="1.2" height="2.3" fill="#fff"/><rect x="55.1" y="28.8" width="8.8" height="3.1" fill="#fff"/><rect x="55.1" y="31.6" width="8.8" height="1.4" fill="#0a0af0"/><path d="M72,22.2 H77.2 L78.9,23.9 V26.2 H72 Z" fill="#1414f4"/><path d="M77.1,22.4 V24 H78.7" fill="#fff" stroke="#fff" stroke-width="0.5"/><rect x="69.6" y="25.9" width="11.4" height="4.9" rx="1" fill="#000"/><rect x="72" y="29.6" width="6.9" height="4.3" fill="#5a5af2"/><path d="M72.6,31.4 H78.3 M72.6,32.8 H78.3" stroke="#8080f4" stroke-width="0.5"/><circle cx="71.2" cy="27.6" r="0.5" fill="#fff"/><path d="M89.82,23.72 L90.18,22.25 L92.82,22.25 L93.18,23.72 L94.36,24.40 L95.82,23.98 L97.14,26.26 L96.05,27.32 L96.05,28.68 L97.14,29.74 L95.82,32.02 L94.36,31.60 L93.18,32.28 L92.82,33.75 L90.18,33.75 L89.82,32.28 L88.64,31.60 L87.18,32.02 L85.86,29.74 L86.95,28.68 L86.95,27.32 L85.86,26.26 L87.18,23.98 L88.64,24.40Z" fill="#000000" stroke="#000000" stroke-width="0.6" stroke-linejoin="round"/><text x="86.5" y="29.8" font-family="Liberation Sans, sans-serif" font-weight="bold" font-size="6.4" fill="#00ee00" stroke="#00ee00" stroke-width="0.3" textLength="9.6" lengthAdjust="spacingAndGlyphs">.ac</text><path d="M103.4,23.6 L111.6,27.9 L103.4,32.3 Z" fill="#00ee00" stroke="#000" stroke-width="1.1" stroke-linejoin="round"/><rect x="118.8" y="23.1" width="9.1" height="9.5" rx="1.6" fill="#a2a2a2" stroke="#979797" stroke-width="0.5"/><rect x="133.7" y="22.7" width="5.1" height="10.8" fill="#fff" stroke="#0000ff" stroke-width="0.75"/><rect x="133.7" y="22.7" width="5.1" height="2.0" fill="#0000ff"/><rect x="139.5" y="22.7" width="5.1" height="10.8" fill="#fff" stroke="#0000ff" stroke-width="0.75"/><rect x="139.5" y="22.7" width="5.1" height="2.0" fill="#0000ff"/><rect x="149.8" y="22.7" width="10.9" height="5" fill="#fff" stroke="#0000ff" stroke-width="0.75"/><rect x="149.8" y="22.7" width="10.9" height="2.1" fill="#0000ff"/><rect x="149.8" y="28.5" width="10.9" height="5" fill="#fff" stroke="#0000ff" stroke-width="0.75"/><rect x="149.8" y="28.5" width="10.9" height="2.1" fill="#0000ff"/><rect x="165.6" y="22.7" width="7.6" height="5" fill="#fff" stroke="#0000ff" stroke-width="0.75"/><rect x="165.6" y="22.7" width="7.6" height="2.1" fill="#0000ff"/><rect x="167.5" y="25.5" width="7.6" height="5" fill="#fff" stroke="#0000ff" stroke-width="0.75"/><rect x="167.5" y="25.5" width="7.6" height="2.1" fill="#0000ff"/><rect x="169.4" y="28.299999999999997" width="7.6" height="5" fill="#fff" stroke="#0000ff" stroke-width="0.75"/><rect x="169.4" y="28.299999999999997" width="7.6" height="2.1" fill="#0000ff"/><path d="M189.1,29.9 L192.5,33.199999999999996" stroke="#000" stroke-width="1.6" stroke-linecap="round"/><circle cx="186.1" cy="26.9" r="4.9" fill="#000"/><path d="M183.5,26.9 H188.7 M186.1,24.299999999999997 V29.5" stroke="#fff" stroke-width="1.3"/><path d="M205.6,29.9 L209.0,33.199999999999996" stroke="#000" stroke-width="1.6" stroke-linecap="round"/><circle cx="202.6" cy="26.9" r="4.9" fill="#000"/><path d="M199.9,26.9 H205.29999999999998" stroke="#fff" stroke-width="1.4"/><path d="M221.7,29.9 L225.1,33.199999999999996" stroke="#000" stroke-width="1.6" stroke-linecap="round"/><circle cx="218.7" cy="26.9" r="4.9" fill="#000"/><path d="M216.5,29.099999999999998 L221.0,24.599999999999998 M219.0,24.299999999999997 H221.29999999999998 V26.599999999999998 M216.1,27.2 V29.5 H218.39999999999998" stroke="#fff" stroke-width="1" fill="none"/><rect x="229.6" y="22.3" width="11.3" height="11.3" rx="1.4" fill="#a9a9a9"/><path d="M232.6,28.5 V24 M230.9,25.6 L232.6,23.8 L234.3,25.6 M237.9,27.4 V32 M236.2,30.3 L237.9,32.1 L239.6,30.3" stroke="#fff" stroke-width="1.1" fill="none"/><rect x="245.1" y="22.3" width="11.9" height="11.6" rx="1.6" fill="#000"/><path d="M245.6,26.8 Q248.5,23.2 251,25.6 T256.4,24.8" stroke="#fff" stroke-width="0.9" fill="none"/><path d="M245.6,31.3 Q248.5,33.3 251,30.3 T256.4,29.6" stroke="#00e0e0" stroke-width="1.1" fill="none"/><path d="M262.6,23.6 H266.2 L267.8,31.8 H271" stroke="#0000ff" stroke-width="1.2" fill="none" stroke-linejoin="round"/><circle cx="262.6" cy="23.6" r="1.4" fill="#0000ff"/><circle cx="271.6" cy="32" r="1.2" fill="#fff" stroke="#0000ff" stroke-width="0.9"/><path d="M283.1,24 V27.6 M277.6,27.6 H288.6 L283.1,32.8 Z" stroke="#000" stroke-width="1.3" fill="none" stroke-linejoin="round"/><circle cx="283.1" cy="23.6" r="1.5" fill="#0000ff"/><ellipse cx="298.9" cy="27.9" rx="4.3" ry="4.6" fill="none" stroke="#000" stroke-width="1.3"/><path d="M297,26.1 L298.9,30.2 L300.8,26.1" stroke="#000" stroke-width="1.2" fill="none"/><circle cx="298.9" cy="23.3" r="1.4" fill="#0000ff"/><circle cx="298.9" cy="32.5" r="1.4" fill="#0000ff"/><path d="M315.3,24 L317.6,25.5 L313.2,27.5 L317.6,29.5 L313.2,30.8 L315.3,32" stroke="#000" stroke-width="1.3" fill="none"/><circle cx="315.3" cy="23.3" r="1.4" fill="#0000ff"/><circle cx="315.3" cy="32.3" r="1.4" fill="#0000ff"/><path d="M330.8,23.3 V25.8 M330.8,29.7 V32.4 M326,25.8 H335.8 M326,29.7 H335.8" stroke="#000" stroke-width="1.3"/><circle cx="330.8" cy="23.2" r="1.4" fill="#0000ff"/><circle cx="330.8" cy="32.4" r="1.4" fill="#0000ff"/><path d="M345.2,23.4 Q349.8,23.6 349.3,26 Q349,27.9 346.3,27.9 Q349.6,28.2 349.3,30.4 Q348.9,32.4 345.2,32.3" stroke="#000" stroke-width="1.2" fill="none"/><circle cx="345.6" cy="23.2" r="1.4" fill="#0000ff"/><circle cx="345.6" cy="32.4" r="1.4" fill="#0000ff"/><path d="M362.8,23.3 V32.4 M358.3,25.3 H367.3 L362.8,29.4 Z M358.6,30 H367" stroke="#000" stroke-width="1.2" fill="none" stroke-linejoin="round"/><circle cx="362.8" cy="23.2" r="1.4" fill="#0000ff"/><circle cx="362.8" cy="32.4" r="1.4" fill="#0000ff"/><path d="M375.8,22.6 H378 V23.4 H380 V22.6 H382.3 V32.9 H375.8 Z" fill="#000"/><path d="M377.9,26 L380.8,27.9 L377.9,29.8 Z" fill="#fff"/><circle cx="374.1" cy="23.1" r="1.2" fill="#0000ff"/><circle cx="383.9" cy="23.1" r="1.2" fill="#0000ff"/><circle cx="374.1" cy="27.9" r="1.2" fill="#0000ff"/><circle cx="383.9" cy="27.9" r="1.2" fill="#0000ff"/><circle cx="374.1" cy="32.6" r="1.2" fill="#0000ff"/><circle cx="383.9" cy="32.6" r="1.2" fill="#0000ff"/><text x="388.8" y="29.0" font-family="Liberation Sans, sans-serif" font-weight="bold" font-size="8" fill="#0000ff" textLength="11.9" lengthAdjust="spacingAndGlyphs">net</text><path d="M389.7,31 H400" stroke="#000088" stroke-width="0.9"/><circle cx="389.8" cy="31" r="1.1" fill="#000088"/><circle cx="399.9" cy="31" r="1.1" fill="#000088"/><text x="407.9" y="32.7" font-family="Liberation Sans, sans-serif" font-weight="bold" font-size="13" fill="#0000ff" textLength="5.8" lengthAdjust="spacingAndGlyphs">t</text><text x="424.2" y="32.9" font-family="Liberation Sans, sans-serif" font-weight="bold" font-size="13.5" fill="#000" stroke="#000" stroke-width="0.4" textLength="5.4" lengthAdjust="spacingAndGlyphs">t</text><rect x="422.7" y="31" width="1.9" height="1.9" fill="#000"/><circle cx="442.9" cy="28.1" r="6" fill="#000"/><path d="M440.5,25.7 L445.3,30.5 M445.3,25.7 L440.5,30.5" stroke="#fff" stroke-width="1.5"/><path d="M460.2,22.3 H465 V27 Z M452.9,29 H457.4 V33.7 Z" fill="#0000ff"/><circle cx="458.3" cy="28.3" r="0.8" fill="#0000ff"/><circle cx="460.3" cy="26.3" r="0.8" fill="#0000ff"/><circle cx="462.2" cy="24.4" r="0.8" fill="#0000ff"/><path d="M476.2,22.3 H480.8 V26.9 Z" fill="#0000ff"/><path d="M469.5,29.5 H473.2 V33.2 Z" fill="none" stroke="#a6a6a6" stroke-width="0.8"/><circle cx="474.6" cy="28.3" r="0.8" fill="#a6a6a6"/><circle cx="476.7" cy="26.2" r="0.8" fill="#a6a6a6"/><path d="M487.6,23.3 H493 M495.2,25.5 V32" stroke="#0000ff" stroke-width="1"/><circle cx="486.3" cy="23.3" r="1.2" fill="#fff" stroke="#0000ff" stroke-width="0.9"/><path d="M492.2,22.3 H496.6 V26.8 Z" fill="#0000ff"/><circle cx="495.2" cy="32.2" r="1.5" fill="#0000ff"/><path d="M485.3,29.5 H489 V33.2 Z" fill="none" stroke="#a6a6a6" stroke-width="0.8"/><circle cx="490.4" cy="28.3" r="0.8" fill="#a6a6a6"/><circle cx="492.2" cy="26.5" r="0.8" fill="#a6a6a6"/><path d="M505.5,23.2 Q501.5,23.8 501.6,28.6" stroke="#a6a6a6" stroke-width="0.9" stroke-dasharray="1 0.8" fill="none"/><path d="M507.8,22.6 L512.9,27.8 L507.8,33 Z" fill="#a6a6a6"/><path d="M501.6,33.6 H509.6 L505.6,29.6 Z" fill="none" stroke="#a6a6a6" stroke-width="0.9"/><path d="M517.4,23.6 V32 L521.6,27.8 Z" fill="none" stroke="#a6a6a6" stroke-width="0.9"/><path d="M528.3,23.3 V32.3 L523.5,27.8 Z" fill="#a6a6a6"/><path d="M522.6,22.6 V33.2" stroke="#a6a6a6" stroke-width="0.7" stroke-dasharray="0.9 0.9"/><path d="M532.9,26.2 L538.8,21.9 L538.8,24.2 Q544.5,24 544.3,29.8 Q544.2,32 542,33.6 Q542.8,29.6 538.8,28.4 L538.8,30.6 Z" fill="#000" stroke="#000" stroke-width="0.5" stroke-linejoin="round"/><path d="M560.2,26.2 L554.3,21.9 L554.3,24.2 Q548.6,24 548.8,29.8 Q548.9,32 551.1,33.6 Q550.3,29.6 554.3,28.4 L554.3,30.6 Z" fill="#a6a6a6" stroke="#a6a6a6" stroke-width="0.5" stroke-linejoin="round"/><path d="M572.4,30.2 L576,33.2" stroke="#000" stroke-width="1.7" stroke-linecap="round"/><circle cx="569.4" cy="27.0" r="4.0" fill="#008a96" stroke="#000" stroke-width="1.6"/><circle cx="568.2" cy="25.7" r="1.3" fill="#30e0f0"/><rect x="580.2" y="19" width="0.9" height="17.8" fill="#dcdcdc"/><path d="M1.2,7.9 Q3.5,6.6 6.3,3.9" stroke="#6a6a6a" stroke-width="1" fill="none"/><path d="M1.2,1.2 L1.6,6" stroke="#b8b8b8" stroke-width="0.6" fill="none"/><path d="M2.6,2.3 H3.6 L2.9,4.2 H4.3 L4,5 H1.9 Z" fill="#a81414"/><path d="M4.4,1.4 H7.4 L7.1,2.4 H6.4 L5.3,4.8 H4.4 L5.4,2.4 H4.1 Z" fill="#b01818"/><text x="9" y="7.5" font-family="Liberation Sans, sans-serif" font-size="6.9" fill="#2a2a2a" stroke="#2a2a2a" stroke-width="0.08" textLength="23.8" lengthAdjust="spacingAndGlyphs">LTspice - 3</text><path d="M689.4,4.5 H694.2" stroke="#333" stroke-width="0.7"/><rect x="709.6" y="2.8" width="3.6" height="3.6" fill="none" stroke="#333" stroke-width="0.7"/><path d="M710.6,2.8 V1.9 H714.1 V5.4 H713.2" fill="none" stroke="#333" stroke-width="0.7"/><path d="M730.2,2 L734.6,6.4 M734.6,2 L730.2,6.4" stroke="#333" stroke-width="0.7"/><text x="3.0" y="16.1" font-family="Liberation Sans, sans-serif" font-size="6.5" fill="#1a1a1a" stroke="#1a1a1a" stroke-width="0.15" textLength="8.9" lengthAdjust="spacingAndGlyphs">File</text><text x="18.2" y="16.1" font-family="Liberation Sans, sans-serif" font-size="6.5" fill="#1a1a1a" stroke="#1a1a1a" stroke-width="0.15" textLength="9.9" lengthAdjust="spacingAndGlyphs">Edit</text><text x="34.7" y="16.1" font-family="Liberation Sans, sans-serif" font-size="6.5" fill="#1a1a1a" stroke="#1a1a1a" stroke-width="0.15" textLength="24.0" lengthAdjust="spacingAndGlyphs">Hierarchy</text><text x="64.8" y="16.1" font-family="Liberation Sans, sans-serif" font-size="6.5" fill="#1a1a1a" stroke="#1a1a1a" stroke-width="0.15" textLength="12.1" lengthAdjust="spacingAndGlyphs">View</text><text x="83.0" y="16.1" font-family="Liberation Sans, sans-serif" font-size="6.5" fill="#1a1a1a" stroke="#1a1a1a" stroke-width="0.15" textLength="22.2" lengthAdjust="spacingAndGlyphs">Simulate</text><text x="111.6" y="16.1" font-family="Liberation Sans, sans-serif" font-size="6.5" fill="#1a1a1a" stroke="#1a1a1a" stroke-width="0.15" textLength="12.8" lengthAdjust="spacingAndGlyphs">Tools</text><text x="130.9" y="16.1" font-family="Liberation Sans, sans-serif" font-size="6.5" fill="#1a1a1a" stroke="#1a1a1a" stroke-width="0.15" textLength="20.8" lengthAdjust="spacingAndGlyphs">Window</text><text x="157.8" y="16.1" font-family="Liberation Sans, sans-serif" font-size="6.5" fill="#1a1a1a" stroke="#1a1a1a" stroke-width="0.15" textLength="12.1" lengthAdjust="spacingAndGlyphs">Help</text><rect x="3.2" y="39.3" width="4.2" height="4.2" fill="#9aa0d8"/><path d="M3.4,40.3 L4.5,39.6 L5.5,40.6 L6.8,39.8 M3.4,42 H7.2" stroke="#d05050" stroke-width="0.6" fill="none"/><text x="8.9" y="44" font-family="Liberation Sans, sans-serif" font-size="6.4" fill="#333">3</text><path d="M25.8,39.4 L23,41.6 L25.8,43.6" stroke="#111" stroke-width="1" fill="none"/><text x="28.1" y="44" font-family="Liberation Sans, sans-serif" font-size="6.4" fill="#444">3</text></svg></body></html>
